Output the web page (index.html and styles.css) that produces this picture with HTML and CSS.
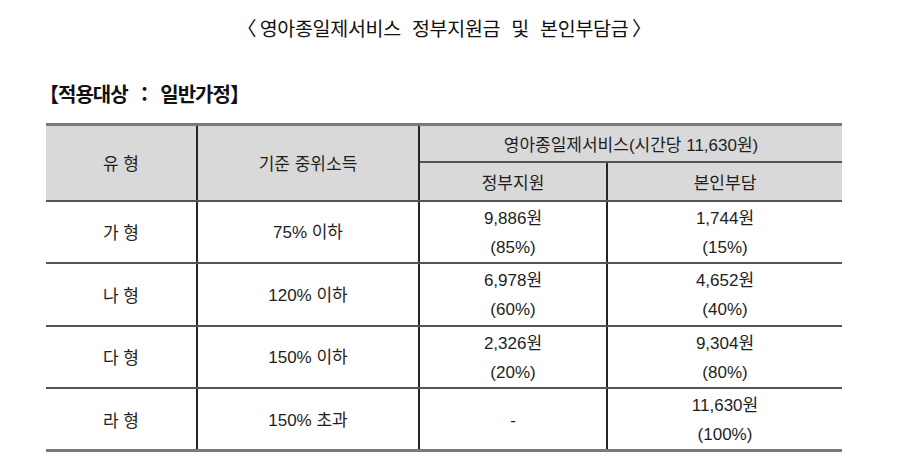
FILE: index.html
```html
<!DOCTYPE html>
<html lang="ko">
<head>
<meta charset="utf-8">
<link rel="stylesheet" href="styles.css">
</head>
<body>
<div class="page">
  <h1 class="title">〈&thinsp;영아종일제서비스 정부지원금 및 본인부담금&thinsp;〉</h1>
  <h2 class="label">【적용대상 : 일반가정】</h2>
  <table class="fee">
    <colgroup>
      <col class="c1"><col class="c2"><col class="c3"><col class="c4">
    </colgroup>
    <thead>
      <tr class="h1">
        <th rowspan="2">유 형</th>
        <th rowspan="2">기준 중위소득</th>
        <th colspan="2">영아종일제서비스<span class="n">(</span>시간당<span class="n"> 11,630</span>원<span class="n">)</span></th>
      </tr>
      <tr class="h2">
        <th>정부지원</th>
        <th>본인부담</th>
      </tr>
    </thead>
    <tbody>
      <tr>
        <td>가 형</td><td><span class="n">75% </span>이하</td>
        <td><span class="n">9,886</span>원<br><span class="n">(85%)</span></td><td><span class="n">1,744</span>원<br><span class="n">(15%)</span></td>
      </tr>
      <tr>
        <td>나 형</td><td><span class="n">120% </span>이하</td>
        <td><span class="n">6,978</span>원<br><span class="n">(60%)</span></td><td><span class="n">4,652</span>원<br><span class="n">(40%)</span></td>
      </tr>
      <tr>
        <td>다 형</td><td><span class="n">150% </span>이하</td>
        <td><span class="n">2,326</span>원<br><span class="n">(20%)</span></td><td><span class="n">9,304</span>원<br><span class="n">(80%)</span></td>
      </tr>
      <tr class="last">
        <td>라 형</td><td><span class="n">150% </span>초과</td>
        <td><span class="n">-</span></td><td><span class="n">11,630</span>원<br><span class="n">(100%)</span></td>
      </tr>
    </tbody>
  </table>
</div>
</body>
</html>
```

FILE: styles.css
```css
* { box-sizing: border-box; }
html, body { margin: 0; padding: 0; background: #fff; }
body {
  font-family: "Noto Sans CJK KR", sans-serif;
  color: #1e1e1e;
}
.page {
  width: 796px;
  margin-left: 46px;
  padding-top: 14px;
}
.title {
  margin: 0;
  font-weight: 400;
  font-size: 19.5px;
  line-height: 28px;
  letter-spacing: -0.3px;
  word-spacing: 6px;
  text-align: center;
  color: #111;
}
.label {
  margin: 38px 0 0 -7px;
  font-weight: 700;
  font-size: 20px;
  line-height: 28px;
  letter-spacing: -1px;
  word-spacing: 9px;
  color: #111;
}
.fee {
  margin-top: 15px;
  width: 796px;
  border-collapse: collapse;
  table-layout: fixed;
  font-size: 17px;
  letter-spacing: 0;
  word-spacing: 0;
  border-top: 3px solid #7a7a7a;
  border-bottom: 3px solid #7a7a7a;
}
.n {
  font-family: "Liberation Sans", sans-serif;
  font-size: 17px;
}
.c1 { width: 151px; }
.c2 { width: 222px; }
.c3 { width: 188px; }
.c4 { width: 235px; }
.fee th, .fee td {
  text-align: center;
  vertical-align: middle;
  font-weight: 400;
  padding: 0;
  border-left: 2px solid #262626;
  border-right: 2px solid #262626;
  border-top: 2px solid #555;
  border-bottom: 2px solid #555;
}
.fee th:first-child, .fee td:first-child { border-left: none; }
.fee tr > :last-child { border-right: none; }
.fee .h2 th:last-child { border-right: none; }
.fee .h1 th:first-child, .fee .h1 th:nth-child(2) { border-right: 2px solid #262626; }
.fee thead th { background: #d9d9d9; }
.fee .h1 th { height: 37px; border-top: none; }
.fee .h2 th { height: 39px; }
.fee td { height: 62.5px; line-height: 27px; }
.fee .last td { border-bottom: none; }
```
